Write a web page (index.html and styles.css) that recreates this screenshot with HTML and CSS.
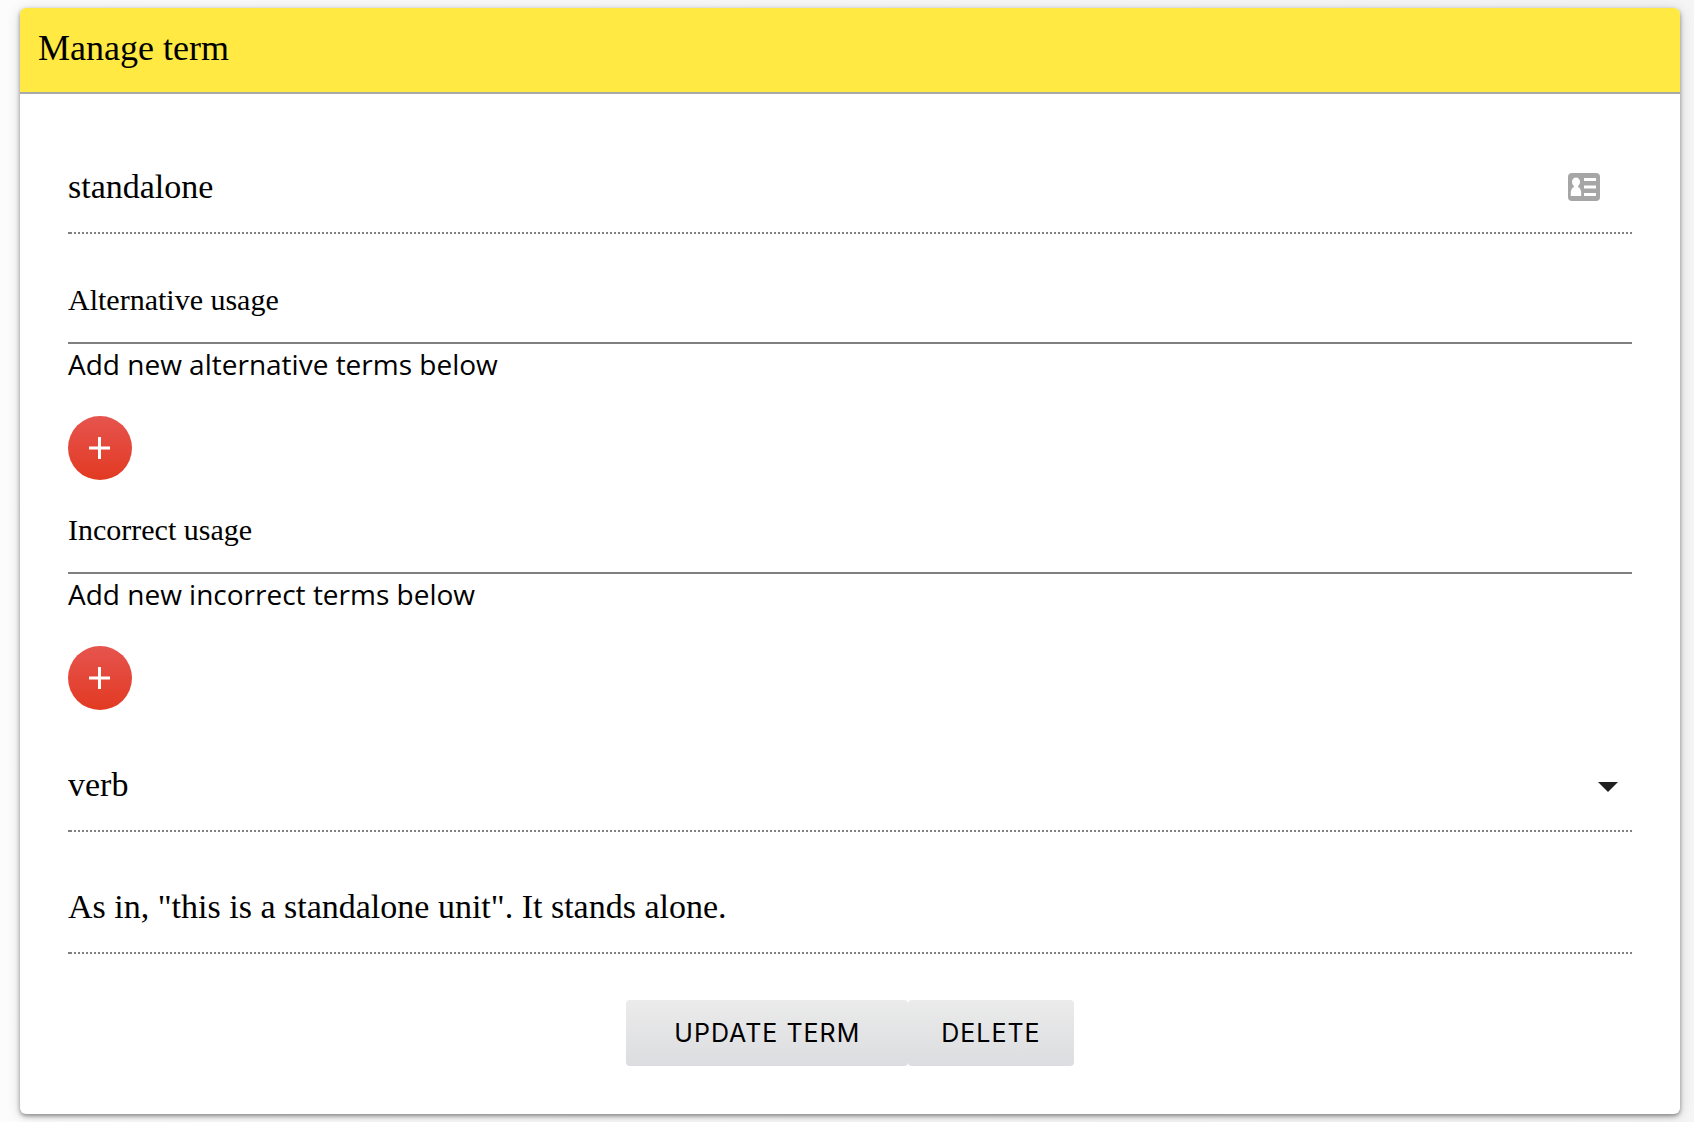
FILE: index.html
```html
<!DOCTYPE html>
<html lang="en">
<head>
<meta charset="utf-8">
<meta name="viewport" content="width=device-width, initial-scale=1">
<title>Manage term</title>
<link rel="stylesheet" href="styles.css">
</head>
<body>
<main class="card">
  <header class="card-header"><h1 class="card-title">Manage term</h1></header>
  <form class="form">
    <div class="field">
      <input class="control" type="text" aria-label="Term" value="standalone">
      <svg class="contact-icon" viewBox="0 0 32 28" aria-hidden="true">
        <rect width="32" height="28" rx="4" fill="#a6a6a6"/>
        <g fill="#fff">
          <ellipse cx="8" cy="9" rx="4" ry="4.5"/>
          <path d="M6 12h4v2c2 .7 3.200 3 3.200 6v3H2.800v-3c0-3 1.200-5.300 3.200-6z"/>
          <path d="M16 5h12v3H16zM16 12.500h12v3H16zM16 20h12v3H16z"/>
        </g>
      </svg>
    </div>
    <section class="usage">
      <h2 class="usage-title">Alternative usage</h2>
      <p class="usage-hint">Add new alternative terms below</p>
      <button class="add" type="button" aria-label="Add alternative term">
        <svg class="add-icon" viewBox="0 0 22 22" aria-hidden="true"><path d="M0 11h21M10.500 0v22" stroke="#fff" stroke-width="3"/></svg>
      </button>
    </section>
    <section class="usage">
      <h2 class="usage-title">Incorrect usage</h2>
      <p class="usage-hint">Add new incorrect terms below</p>
      <button class="add" type="button" aria-label="Add incorrect term">
        <svg class="add-icon" viewBox="0 0 22 22" aria-hidden="true"><path d="M0 11h21M10.500 0v22" stroke="#fff" stroke-width="3"/></svg>
      </button>
    </section>
    <div class="field field-spaced">
      <select class="control" aria-label="Part of speech"><option>verb</option></select>
      <svg class="arrow-icon" viewBox="0 0 24 24" aria-hidden="true"><path d="M7 10.500l5 5 5-5z" fill="#212121"/></svg>
    </div>
    <div class="field field-spaced">
      <input class="control" type="text" aria-label="Description" value="As in, &quot;this is a standalone unit&quot;. It stands alone.">
    </div>
    <div class="actions">
      <button class="button button-wide" type="submit">UPDATE TERM</button>
      <button class="button" type="button">DELETE</button>
    </div>
  </form>
</main>
</body>
</html>
```
FILE: styles.css
```css
* { box-sizing: border-box; }

body {
  margin: 0;
  padding: 8px 14px 8px 20px;
  background: linear-gradient(90deg, #fcfcfc, #f5f5f5);
  color: #000;
  font-family: "Liberation Serif", serif;
}

.card {
  background: #fff;
  border-radius: 6px;
  box-shadow: 0 2px 4px rgba(0, 0, 0, .4), 0 2px 14px rgba(0, 0, 0, .16);
}

.card-header {
  padding: 20px 18px 24px;
  background: #ffe942;
  border-bottom: 2px solid #a9a9a9;
  border-radius: 6px 6px 0 0;
}

.card-title {
  margin: 0;
  font-size: 36px;
  font-weight: 400;
  line-height: 40px;
}

.form { padding: 48px; }

.field {
  display: flex;
  align-items: center;
  padding: 25px 0 27px;
  background:
    linear-gradient(#808080, #808080) left bottom / 2px 2px no-repeat,
    repeating-linear-gradient(-90deg, #808080 0 2px, transparent 2px 4px) left bottom / 100% 2px no-repeat;
}

.field-spaced { margin-top: 30px; }

.control {
  flex: 1;
  min-width: 0;
  height: 40px;
  margin: 0;
  padding: 0;
  border: 0;
  outline: 0;
  background: transparent;
  color: inherit;
  font-family: inherit;
  font-size: 34px;
  line-height: 40px;
  appearance: none;
}

.contact-icon {
  width: 32px;
  height: 28px;
  margin-right: 32px;
}

.arrow-icon {
  width: 48px;
  height: 48px;
  margin: -4px 0;
}

.usage { margin-top: 32px; }
.field + .usage { margin-top: 48px; }

.usage-title {
  margin: 0;
  padding-bottom: 24px;
  border-bottom: 2px solid #808080;
  font-size: 30px;
  font-weight: 400;
  line-height: 36px;
}

.usage-hint {
  margin: 0 0 32px;
  font-family: "Open Sans", sans-serif;
  font-size: 28px;
  line-height: 40px;
}

.add {
  display: flex;
  align-items: center;
  justify-content: center;
  width: 64px;
  height: 64px;
  padding: 0;
  border: 0;
  border-radius: 50%;
  background: linear-gradient(#e6544e, #e23a22);
}

.add-icon {
  width: 22px;
  height: 22px;
}

.actions {
  display: flex;
  justify-content: center;
  margin-top: 46px;
}

.button {
  padding: 16px 33px;
  border: 0;
  border-radius: 4px;
  background: linear-gradient(#ebebeb, #dcdde0);
  color: #000;
  font-family: Inter, sans-serif;
  font-size: 25px;
  line-height: 34px;
  letter-spacing: 1px;
}

.button-wide { padding: 16px 48px; }
```
